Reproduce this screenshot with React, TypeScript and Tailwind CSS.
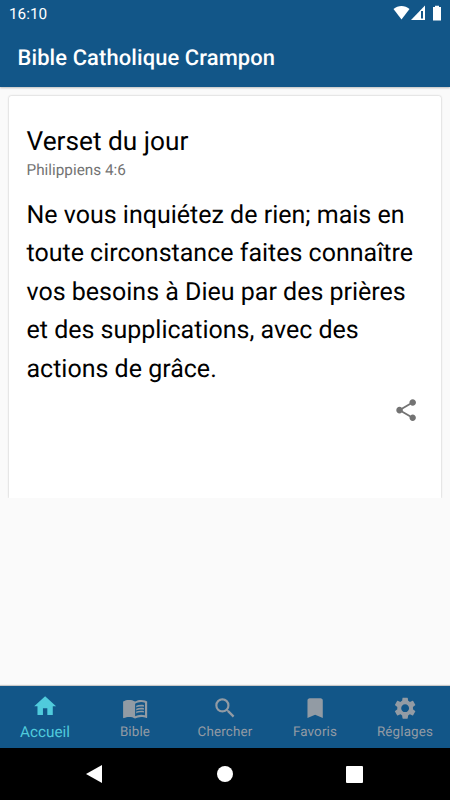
import React from "react";
import { MdBookmark, MdHome, MdMenuBook, MdSearch, MdSettings, MdShare } from "react-icons/md";

const verse = [
  "Ne vous inquiétez de rien; mais en",
  "toute circonstance faites connaître",
  "vos besoins à Dieu par des prières",
  "et des supplications, avec des",
  "actions de grâce.",
];

const tabs = [
  { label: "Bible", Icon: MdMenuBook },
  { label: "Chercher", Icon: MdSearch },
  { label: "Favoris", Icon: MdBookmark },
  { label: "Réglages", Icon: MdSettings },
];

function StatusBar() {
  return (
    <div className="flex h-[26px] items-center justify-between pl-[9px] pr-2 text-white">
      <span className="pt-[2px] text-[15.3px] leading-6">16:10</span>
      <svg width="49" height="16" viewBox="0 0 49 16" fill="currentColor">
        <path d="M.5 4C5-.1 12-.1 16.5 4L8.5 14.5z" />
        <path d="M18 15L32 .5V15z" />
        <path d="M28 6h2v7.5h-2z" fill="#125688" />
        <path d="M40 2h2V.8h4V2h2v13.5h-8z" />
      </svg>
    </div>
  );
}

export default function App() {
  return (
    <div className="flex h-[800px] w-[450px] flex-col overflow-hidden bg-[#fafafa] font-[Roboto,sans-serif] [text-rendering:geometricPrecision]">
      <header className="h-[87px] shrink-0 bg-[#125688] shadow-[0_1px_2px_rgba(0,0,0,0.25)]">
        <StatusBar />
        <h1 className="pl-[17.5px] pt-[18px] text-[21.9px] font-medium leading-[30px] tracking-[0.12px] text-white">
          Bible Catholique Crampon
        </h1>
      </header>

      <main className="flex-1 px-[9px] pt-[9px]">
        <div className="-mx-[9px] -mt-[3px] overflow-hidden px-[9px] pt-[3px]">
          <section className="flex h-[402px] flex-col rounded-t-[2px] bg-white pl-[17.5px] pr-[22px] pt-[30px] shadow-[0_0_2px_rgba(0,0,0,0.3)]">
            <h2 className="text-[26.25px] leading-[32px] text-black">Verset du jour</h2>
            <p className="mt-[2px] text-[15.3px] leading-5 text-[#737373]">Philippiens 4:6</p>
            <div className="mt-[17px] text-[25px] leading-[38.4px] text-black">
              {verse.map((line) => (
                <p key={line} className="whitespace-nowrap">{line}</p>
              ))}
            </div>
            <MdShare className="mt-[8px] shrink-0 self-end text-[#737373]" size={26.25} />
          </section>
        </div>
      </main>

      <nav className="grid h-[62px] shrink-0 grid-cols-5 bg-[#125688] shadow-[0_-1px_1px_rgba(0,0,0,0.2)]">
        <div className="flex flex-col items-center pt-[7px] text-[#50cbdc]">
          <MdHome size={26.25} />
          <span className="mt-[3px] text-[15.3px] leading-5">Accueil</span>
        </div>
        {tabs.map(({ label, Icon }) => (
          <div key={label} className="flex flex-col items-center pt-[9px] text-[#929ba4]">
            <Icon size={26.25} />
            <span className="mt-[3px] text-[13.4px] leading-[18px] tracking-[0.15px]">{label}</span>
          </div>
        ))}
      </nav>

      <div className="flex h-[52px] shrink-0 items-center justify-center gap-[113px] bg-black text-white">
        <svg className="-ml-[3px] mr-[1px]" width="18" height="20" viewBox="0 0 18 20" fill="currentColor">
          <path d="M1 10L17 1v18z" />
        </svg>
        <div className="size-4 rounded-full bg-white" />
        <div className="size-[17px] rounded-[1px] bg-white" />
      </div>
    </div>
  );
}
